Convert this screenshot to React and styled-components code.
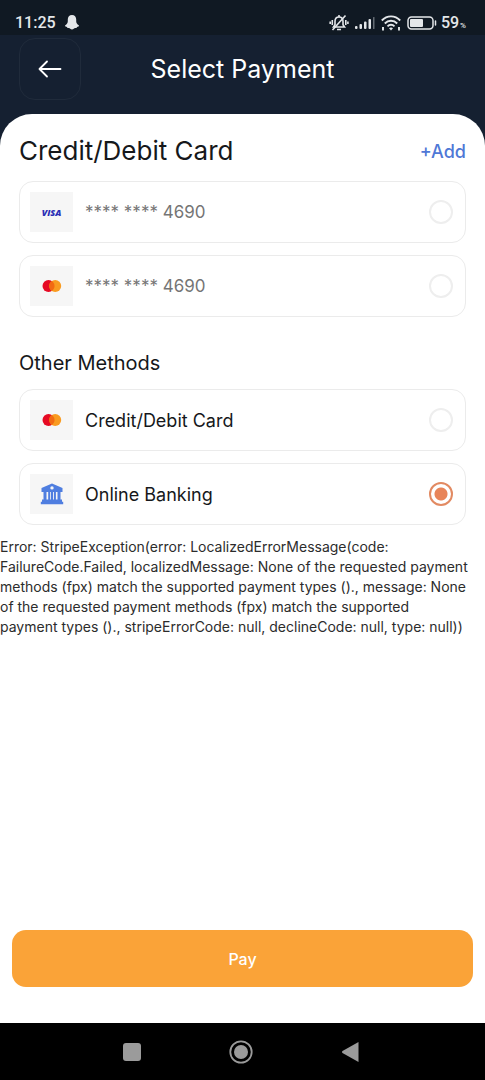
import React, { useState } from "react";
import styled, { createGlobalStyle } from "styled-components";

const GlobalStyle = createGlobalStyle`
  * {
    box-sizing: border-box;
  }

  body {
    margin: 0;
    background-color: #fff;
    font-family: Inter, "Open Sans", sans-serif;
    color: #16181b;
  }

  button {
    font-family: inherit;
    cursor: pointer;
  }
`;

const Screen = styled.div`
  min-height: 100vh;
  display: flex;
  flex-direction: column;
  background-color: #152031;
`;

const StatusBar = styled.div`
  display: flex;
  justify-content: space-between;
  align-items: center;
  height: 35px;
  padding: 10px 19px 0 15px;
  background-color: #101923;
  color: #e4e7ea;
  font-family: Roboto, sans-serif;
  font-size: 16px;
  font-weight: 500;
`;

const StatusGroup = styled.div`
  display: flex;
  align-items: center;
  gap: ${(props) => props.$gap}px;
`;

const Battery = styled.span`
  display: flex;
  align-items: center;
  gap: 4px;

  small {
    font-size: 8px;
    margin-left: 1px;
  }
`;

const Header = styled.header`
  display: grid;
  grid-template-columns: 62px 1fr 62px;
  align-items: center;
  padding: 3px 19px 14px;
`;

const BackButton = styled.button`
  display: flex;
  justify-content: center;
  align-items: center;
  height: 62px;
  padding: 0;
  border: 1px solid #202b3b;
  border-radius: 16px;
  background: transparent;
  color: #fff;
`;

const Title = styled.h1`
  margin: 0;
  text-align: center;
  color: #fff;
  font-size: 25px;
  font-weight: 400;
  line-height: 36px;
`;

const Sheet = styled.main`
  flex: 1;
  display: flex;
  flex-direction: column;
  background-color: #fff;
  border-radius: 32px 32px 0 0;
`;

const Section = styled.section`
  padding: ${(props) => props.$top}px 19px 0;
`;

const SectionHead = styled.div`
  display: flex;
  justify-content: space-between;
  align-items: center;
  margin-bottom: 12px;
`;

const Heading = styled.h2`
  margin: 0;
  font-size: ${(props) => (props.$large ? 26 : 20)}px;
  font-weight: 400;
  line-height: ${(props) => (props.$large ? 36 : 28)}px;
`;

const AddButton = styled.button`
  padding: 0;
  border: none;
  background: none;
  color: #4f78d6;
  font-size: 18px;
  font-weight: 500;
`;

const Methods = styled.div`
  display: flex;
  flex-direction: column;
  gap: 12px;
`;

const Method = styled.label`
  display: flex;
  align-items: center;
  gap: 12px;
  height: 62px;
  padding: 0 12px 0 10px;
  border: 1px solid #ebebeb;
  border-radius: 14px;
  color: ${(props) => (props.$muted ? "#757575" : "#16181b")};
  font-size: ${(props) => (props.$muted ? 17 : 18)}px;
  cursor: pointer;
`;

const Tile = styled.span`
  display: flex;
  justify-content: center;
  align-items: center;
  width: 43px;
  height: 40px;
  background-color: #f6f6f6;
`;

const MethodName = styled.span`
  flex: 1;
`;

const Visa = styled.span`
  color: #2b2fb5;
  font-family: "Open Sans", sans-serif;
  font-size: 9px;
  font-weight: 800;
  font-style: italic;
`;

const Radio = styled.input`
  appearance: none;
  width: 24px;
  height: 24px;
  margin: 0;
  border: 2px solid #eeeeee;
  border-radius: 50%;
  cursor: pointer;

  &:checked {
    border-color: #e28a62;
    background: radial-gradient(circle, #e8855a 6px, #fff 7px);
  }
`;

const ErrorText = styled.p`
  margin: 12px 0 0;
  color: #2c2c2c;
  font-size: 14px;
  line-height: 20px;
`;

const Footer = styled.div`
  margin-top: auto;
  padding: 24px 12px 36px;
`;

const PayButton = styled.button`
  width: 100%;
  height: 57px;
  border: none;
  border-radius: 14px;
  background-color: #faa338;
  color: #fff;
  font-size: 16px;
  font-weight: 500;
`;

const NavBar = styled.nav`
  display: flex;
  justify-content: center;
  align-items: center;
  gap: 69px;
  height: 57px;
  padding-right: 3px;
  background-color: #000;
`;

const NavButton = styled.button`
  display: flex;
  justify-content: center;
  align-items: center;
  width: 40px;
  height: 40px;
  padding: 0;
  border: none;
  background: none;
  color: #9b9b9b;
`;

const GhostIcon = () => (
  <svg width="14" height="15" viewBox="0 0 14 15" fill="currentColor">
    <path d="M7 0C4.300 0 2.800 2 2.800 4.300v2C2.800 8 1.800 9.300.3 10.300c-.5.4-.3 1 .3 1.200l1.400.4c.3 1 .8 1.300 1.800 1.200 1-.1 1.700 1.400 3.200 1.400s2.200-1.500 3.200-1.400c1 .1 1.500-.2 1.800-1.200l1.400-.4c.6-.2.800-.8.3-1.200-1.500-1-2.500-2.300-2.500-4v-2C11.200 2 9.700 0 7 0z" />
  </svg>
);

const MutedBellIcon = () => (
  <svg width="20" height="18" viewBox="0 0 20 18" fill="none" stroke="currentColor" strokeWidth="1.600">
    <path d="M4.500 13h11L14 10.800V7.500C14 4.500 12.500 3 10 3S6 4.500 6 7.500v3.300z" />
    <path d="M8 15.500h4M10 1v2M3.300 6v5M1.200 7.500v2.500M16.800 6v5M18.900 7.500v2.500M3.500 16 16.500 1.500" />
  </svg>
);

const SignalIcon = () => (
  <svg width="20" height="14" viewBox="0 0 20 14" fill="currentColor">
    <rect x="0" y="10" width="2.500" height="3" rx="1" />
    <rect x="4.500" y="8" width="2.500" height="5" rx="1" />
    <rect x="9" y="5.500" width="2.500" height="7.500" rx="1" />
    <rect x="13.500" y="3" width="2.500" height="10" rx="1" />
    <rect x="18" y="1" width="1.500" height="12" rx="0.500" opacity="0.400" />
  </svg>
);

const WifiIcon = () => (
  <svg width="20" height="16" viewBox="0 0 20 16" fill="none" stroke="currentColor" strokeWidth="1.900">
    <path d="M.8 5.500C6 0 14 0 19.200 5.500M3.800 8.500c3.500-3.600 8.900-3.600 12.400 0M6.500 11.300c2-2 5-2 7 0" />
    <path d="M8 13.200 10 15.500l2-2.300c-1.200-1-2.800-1-4 0z" fill="currentColor" stroke="none" />
    <path d="M2 12v3.500M18 12v3.500" />
  </svg>
);

const BatteryIcon = () => (
  <svg width="30" height="14" viewBox="0 0 30 14">
    <rect x="1" y="1" width="25" height="12" rx="3.500" fill="none" stroke="currentColor" strokeWidth="1.500" />
    <rect x="3" y="3" width="13" height="8" rx="1" fill="currentColor" />
    <path d="M28.500 5v4" stroke="currentColor" strokeWidth="1.500" strokeLinecap="round" />
  </svg>
);

const ArrowIcon = () => (
  <svg width="24" height="18" viewBox="0 0 24 18" fill="none" stroke="currentColor" strokeWidth="1.800" strokeLinecap="round" strokeLinejoin="round">
    <path d="M22.500 9h-21M9 1.500 1.500 9 9 16.500" />
  </svg>
);

const MastercardIcon = () => (
  <svg width="20" height="12" viewBox="0 0 20 12">
    <circle cx="6.500" cy="6" r="6" fill="#e60a24" />
    <circle cx="13.200" cy="6" r="6" fill="#f99b20" />
    <path d="M9.850 1a6 6 0 0 1 0 10 6 6 0 0 1 0-10z" fill="#f26a12" />
  </svg>
);

const BankIcon = () => (
  <svg width="24" height="22" viewBox="0 0 24 22" fill="#4f7ee0">
    <path
      fillRule="evenodd"
      d="M12 .500 22.500 5v4h-21V5zM12 3.200a1.700 1.700 0 1 0 0 3.400 1.700 1.700 0 0 0 0-3.400z"
    />
    <path d="M3.500 8.500h3V17h-3zM8.200 8.500h2V17h-2zM11 8.500h2V17h-2zM13.900 8.500h2V17h-2zM17.500 8.500h3V17h-3z" />
    <path d="M2 16.500h20v2.200h1.200v2.500H.8v-2.500H2z" />
  </svg>
);

const savedCards = [
  { id: "visa", name: "**** **** 4690", icon: <Visa>VISA</Visa> },
  { id: "mastercard", name: "**** **** 4690", icon: <MastercardIcon /> },
];

const otherMethods = [
  { id: "card", name: "Credit/Debit Card", icon: <MastercardIcon /> },
  { id: "banking", name: "Online Banking", icon: <BankIcon /> },
];

const App = () => {
  const [selected, setSelected] = useState("banking");

  const renderMethod = (method, muted) => (
    <Method key={method.id} htmlFor={method.id} $muted={muted}>
      <Tile>{method.icon}</Tile>
      <MethodName>{method.name}</MethodName>
      <Radio
        type="radio"
        name="method"
        id={method.id}
        checked={selected === method.id}
        onChange={() => setSelected(method.id)}
      />
    </Method>
  );

  return (
    <Screen>
      <GlobalStyle />
      <StatusBar>
        <StatusGroup $gap={9}>
          <span>11:25</span>
          <GhostIcon />
        </StatusGroup>
        <StatusGroup $gap={6}>
          <MutedBellIcon />
          <SignalIcon />
          <WifiIcon />
          <Battery>
            <BatteryIcon />
            <span>59<small>%</small></span>
          </Battery>
        </StatusGroup>
      </StatusBar>

      <Header>
        <BackButton aria-label="Back">
          <ArrowIcon />
        </BackButton>
        <Title>Select Payment</Title>
      </Header>

      <Sheet>
        <Section $top={19}>
          <SectionHead>
            <Heading $large>Credit/Debit Card</Heading>
            <AddButton>+Add</AddButton>
          </SectionHead>
          <Methods>{savedCards.map((method) => renderMethod(method, true))}</Methods>
        </Section>

        <Section $top={32}>
          <SectionHead>
            <Heading>Other Methods</Heading>
          </SectionHead>
          <Methods>{otherMethods.map((method) => renderMethod(method, false))}</Methods>
        </Section>

        <ErrorText>
          Error: StripeException(error: LocalizedErrorMessage(code:
          <br />
          FailureCode.Failed, localizedMessage: None of the requested payment
          <br />
          methods (fpx) match the supported payment types ()., message: None
          <br />
          of the requested payment methods (fpx) match the supported
          <br />
          payment types ()., stripeErrorCode: null, declineCode: null, type: null))
        </ErrorText>

        <Footer>
          <PayButton>Pay</PayButton>
        </Footer>
      </Sheet>

      <NavBar>
        <NavButton aria-label="Recent apps">
          <svg width="18" height="18" viewBox="0 0 18 18" fill="currentColor">
            <rect width="18" height="18" rx="3" />
          </svg>
        </NavButton>
        <NavButton aria-label="Home">
          <svg width="24" height="24" viewBox="0 0 24 24" fill="currentColor">
            <circle cx="12" cy="12" r="10.700" fill="none" stroke="currentColor" strokeWidth="1.800" />
            <circle cx="12" cy="12" r="7" />
          </svg>
        </NavButton>
        <NavButton aria-label="Back to previous screen">
          <svg width="17" height="20" viewBox="0 0 17 20" fill="currentColor">
            <path d="M16.500 0v20L.5 11q-1-1 0-2z" />
          </svg>
        </NavButton>
      </NavBar>
    </Screen>
  );
};

export default App;
